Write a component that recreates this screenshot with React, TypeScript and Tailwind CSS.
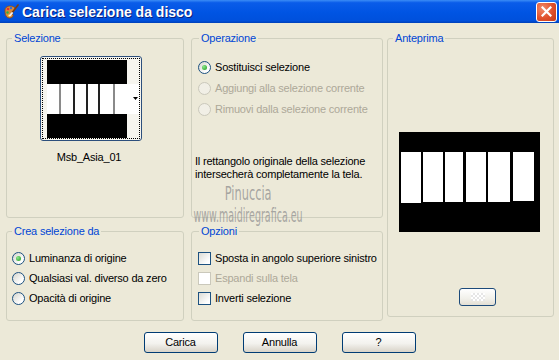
import type { ReactNode } from "react";

const FONT = "font-['Liberation_Sans','DejaVu_Sans',Arial,sans-serif]";

function Group({ title, className, legendClass = "ml-[5px]", children }: { title: string; className: string; legendClass?: string; children: ReactNode }) {
  return (
    <fieldset className={`border border-[#d0d0bf] rounded-[3px] p-0 m-0 ${className}`}>
      <legend className={`px-[2px] text-[11px] leading-[13px] text-[#0046d5] ${legendClass}`}>{title}</legend>
      {children}
    </fieldset>
  );
}

function Radio({ checked, disabled }: { checked?: boolean; disabled?: boolean }) {
  return (
    <span
      className={`w-[13px] h-[13px] shrink-0 rounded-full border flex items-center justify-center ${
        disabled ? "border-[#cac8bb] bg-[#f1efe6]" : "border-[#1c5180] bg-[linear-gradient(135deg,#d4d4cc,#ffffff_75%)]"
      }`}
    >
      {checked && <span className="w-[5px] h-[5px] rounded-full bg-[radial-gradient(circle_at_35%_35%,#8be68b,#1e9b1e)]" />}
    </span>
  );
}

function Check({ disabled }: { disabled?: boolean }) {
  return (
    <span
      className={`w-[13px] h-[13px] shrink-0 border ${
        disabled ? "border-[#cac8bb] bg-[#ffffff]" : "border-[#1c5180] bg-[linear-gradient(135deg,#dcdcd5,#ffffff_80%)]"
      }`}
    />
  );
}

function Row({ children, label, disabled, h = "h-[20px]" }: { children: ReactNode; label: string; disabled?: boolean; h?: string }) {
  return (
    <div className={`flex items-center gap-[4px] whitespace-nowrap ${h}`}>
      {children}
      <span className={disabled ? "text-[#aca899]" : "text-black"}>{label}</span>
    </div>
  );
}

function XpButton({ label, w = "w-[74px]" }: { label: string; w?: string }) {
  return (
    <button className={`${w} h-[21px] rounded-[3px] border border-[#003c74] bg-[linear-gradient(to_bottom,#ffffff,#f3f2ee_55%,#d8d3c8)] text-[11px] leading-[13px] text-black`}>
      {label}
    </button>
  );
}

function AppIcon() {
  return (
    <svg width="16" height="16" viewBox="0 0 16 16">
      <path d="M2 6 C2 2 8 1 11 3 C13 4.5 12 6.5 10 7 C8.5 7.5 9 10 10 11 C11 13 7 15 4.5 13.5 C2 12 2 9 2 6 Z" fill="#d98a3a" stroke="#8a4a14" strokeWidth="0.8" />
      <circle cx="5" cy="5" r="1.3" fill="#e23030" />
      <circle cx="8" cy="4" r="1.2" fill="#2f6fe0" />
      <circle cx="4.5" cy="8.5" r="1.2" fill="#2fb040" />
      <circle cx="6" cy="11.5" r="1.1" fill="#f3e03a" />
      <path d="M15 1 L8.5 9.5" stroke="#7a3d10" strokeWidth="1.6" strokeLinecap="round" />
      <path d="M9 9 L7 11.5" stroke="#f2f2f2" strokeWidth="2" strokeLinecap="round" />
    </svg>
  );
}

function Thumb() {
  const lines = [
    { x: 12, c: "#8a8a8a" },
    { x: 26, c: "#222" },
    { x: 39, c: "#222" },
    { x: 51, c: "#222" },
    { x: 66, c: "#8a8a8a" },
  ];
  return (
    <svg width="92" height="78" viewBox="0 0 92 78" className="block">
      <rect x="80" y="0" width="12" height="78" fill="#f6f5ef" />
      <rect x="0" y="0" width="80" height="24" fill="#000" />
      <rect x="0" y="24" width="92" height="30" fill="#fff" />
      <rect x="0" y="54" width="80" height="24" fill="#000" />
      {lines.map((l) => (
        <rect key={l.x} x={l.x} y="24" width="2" height="30" fill={l.c} />
      ))}
      <polygon points="86,37 91,37 88.5,40" fill="#000" />
    </svg>
  );
}

function Preview() {
  const bars: [number, number, number][] = [
    [2, 20, 71],
    [24, 20, 70],
    [46, 18, 70],
    [67, 20, 70],
    [89, 22, 70],
    [114, 21, 69],
  ];
  return (
    <svg width="141" height="100" viewBox="0 0 141 100" className="block">
      <rect width="141" height="100" fill="#000" />
      {bars.map(([x, w, b]) => (
        <rect key={x} x={x} y="20" width={w} height={b - 20} fill="#fff" />
      ))}
    </svg>
  );
}

export default function App() {
  return (
    <div className={`relative w-[559px] h-[360px] overflow-hidden bg-[#ece9d8] text-[11px] leading-[13px] tracking-[-0.2px] ${FONT}`}>
      {/* title bar */}
      <div className="flex items-center h-[23px] bg-[linear-gradient(to_bottom,#3b8cf6_0%,#0a5ce9_12%,#0054e3_55%,#0050dc_90%,#0040b8_100%)]">
        <div className="ml-[3px] w-[16px] h-[16px]">
          <AppIcon />
        </div>
        <span className="ml-[3px] text-white font-bold text-[14px] leading-[16px] tracking-normal [text-shadow:1px_1px_#0a1e7a]">
          Carica selezione da disco
        </span>
        <div className="ml-auto mr-[2px] w-[21px] h-[20px] rounded-[3px] border border-white bg-[radial-gradient(circle_at_30%_30%,#f08a6a,#e0502c_55%,#c63a18)] flex items-center justify-center">
          <svg width="11" height="11" viewBox="0 0 11 11">
            <path d="M1.5 1.5 L9.5 9.5 M9.5 1.5 L1.5 9.5" stroke="#fff" strokeWidth="2.2" strokeLinecap="square" />
          </svg>
        </div>
      </div>

      {/* body */}
      <div className="flex pl-[6px] pt-[9px]">
        <div className="flex flex-col w-[178px]">
          <Group title="Selezione" className="h-[186px]">
            <div className="pl-[33px] pt-[11px]">
              <div className="w-[102px] h-[85px] rounded-[3px] border border-[#2c4f7c] bg-[#f6f5ef] p-[1px]">
                <div className="h-full border border-dotted border-black pl-[4px] pt-[1px]">
                  <Thumb />
                </div>
              </div>
              <div className="w-[98px] mt-[10px] text-center text-black">Msb_Asia_01</div>
            </div>
          </Group>
          <Group title="Crea selezione da" className="mt-[7px] h-[96px]">
            <div className="pl-[5px] pt-[10px]">
              <Row label="Luminanza di origine">
                <Radio checked />
              </Row>
              <Row label="Qualsiasi val. diverso da zero">
                <Radio />
              </Row>
              <Row label="Opacità di origine">
                <Radio />
              </Row>
            </div>
          </Group>
        </div>

        <div className="flex flex-col w-[192px] ml-[7px]">
          <Group title="Operazione" className="h-[186px]" legendClass="ml-[7px]">
            <div className="pl-[6px] pt-[12px]">
              <Row label="Sostituisci selezione" h="h-[21px]">
                <Radio checked />
              </Row>
              <Row label="Aggiungi alla selezione corrente" disabled h="h-[21px]">
                <Radio disabled />
              </Row>
              <Row label="Rimuovi dalla selezione corrente" disabled h="h-[21px]">
                <Radio disabled />
              </Row>
              <p className="mt-[35px] -ml-[3px] text-black">
                Il rettangolo originale della selezione
                <br />
                intersecherà completamente la tela.
              </p>
            </div>
          </Group>
          <Group title="Opzioni" className="mt-[7px] h-[96px]" legendClass="ml-[7px]">
            <div className="pl-[6px] pt-[10px]">
              <Row label="Sposta in angolo superiore sinistro">
                <Check />
              </Row>
              <Row label="Espandi sulla tela" disabled>
                <Check disabled />
              </Row>
              <Row label="Inverti selezione">
                <Check />
              </Row>
            </div>
          </Group>
        </div>

        <div className="w-[167px] ml-[4px]">
          <Group title="Anteprima" className="h-[285px]">
            <div className="pl-[11px] pt-[87px]">
              <Preview />
              <div className="ml-[60px] mt-[56px] w-[37px] h-[18px] rounded-[3px] border border-[#1c4a7a] bg-[linear-gradient(to_bottom,#ffffff,#f1f0ea_60%,#e3dfd4)] flex items-center justify-center">
                <span className="w-[14px] h-[8px] bg-[repeating-conic-gradient(#e6e6e6_0_25%,#ffffff_0_50%)] bg-[length:4px_4px]" />
              </div>
            </div>
          </Group>
        </div>
      </div>

      {/* buttons */}
      <div className="flex justify-center gap-[25px] mt-[11px]">
        <XpButton label="Carica" />
        <XpButton label="Annulla" />
        <XpButton label="?" />
      </div>

      {/* watermark */}
      <div className="absolute left-[190px] top-[182px] w-[116px] flex flex-col items-center text-[#8e8e8e]/75 tracking-normal font-['DejaVu_Sans',sans-serif] pointer-events-none">
        <span className="text-[19px] leading-[22px] scale-x-[0.6]">Pinuccia</span>
        <span className="text-[19px] leading-[20px] scale-x-[0.5] mt-[1px] whitespace-nowrap">www.maidiregrafica.eu</span>
      </div>
    </div>
  );
}
